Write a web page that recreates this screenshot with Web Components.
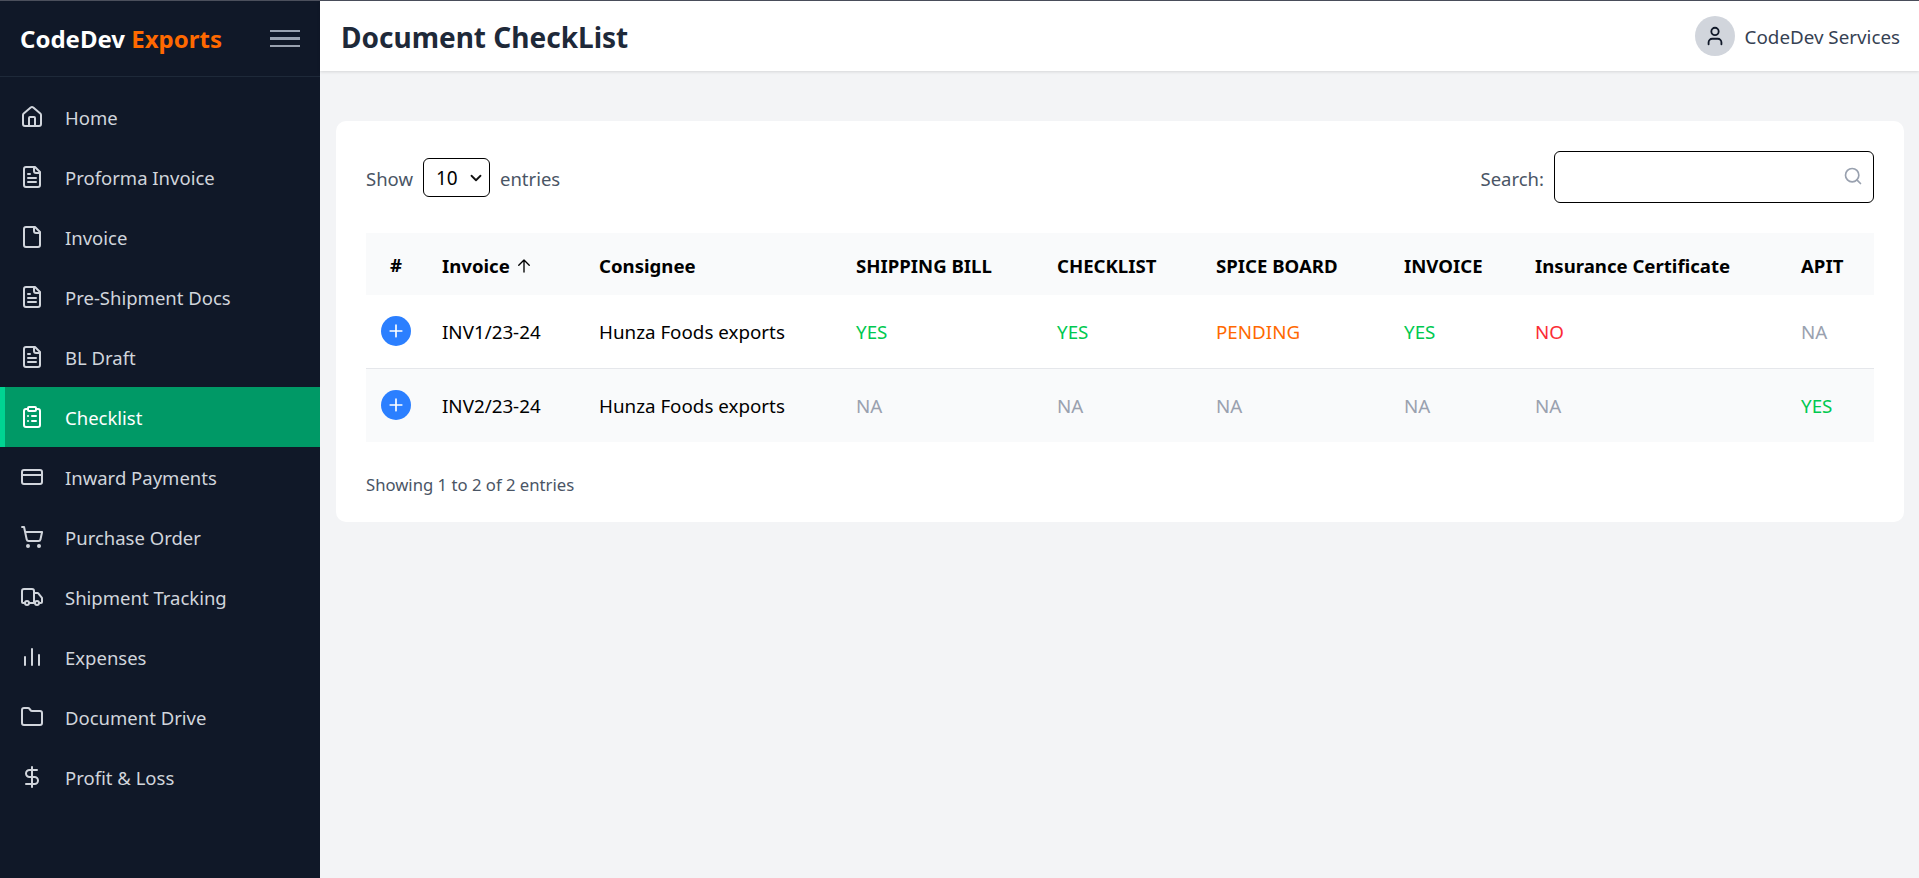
<!DOCTYPE html>
<html>
<head>
<meta charset="utf-8">
<title>Document CheckList</title>
<style>
  html, body { margin: 0; height: 100%; }
  body { font-family: "Noto Sans", "Liberation Sans", sans-serif; background: #f3f4f6; overflow: hidden; }
</style>
</head>
<body>
<app-shell>
  <side-bar slot="side">
    <nav-item icon="home">Home</nav-item>
    <nav-item icon="doc">Proforma Invoice</nav-item>
    <nav-item icon="blank">Invoice</nav-item>
    <nav-item icon="doc">Pre-Shipment Docs</nav-item>
    <nav-item icon="doc">BL Draft</nav-item>
    <nav-item icon="clipboard" active>Checklist</nav-item>
    <nav-item icon="card">Inward Payments</nav-item>
    <nav-item icon="cart">Purchase Order</nav-item>
    <nav-item icon="truck">Shipment Tracking</nav-item>
    <nav-item icon="bars">Expenses</nav-item>
    <nav-item icon="folder">Document Drive</nav-item>
    <nav-item icon="dollar">Profit &amp; Loss</nav-item>
  </side-bar>
  <top-bar slot="top" heading="Document CheckList" user="CodeDev Services"></top-bar>
  <table-card>
    <checklist-table></checklist-table>
  </table-card>
</app-shell>

<script>
const ICONS = {
  home: '<path d="M15 21v-8a1 1 0 0 0-1-1h-4a1 1 0 0 0-1 1v8"/><path d="M3 10a2 2 0 0 1 .709-1.528l7-5.999a2 2 0 0 1 2.582 0l7 5.999A2 2 0 0 1 21 10v9a2 2 0 0 1-2 2H5a2 2 0 0 1-2-2z"/>',
  doc: '<path d="M15 2H6a2 2 0 0 0-2 2v16a2 2 0 0 0 2 2h12a2 2 0 0 0 2-2V7Z"/><path d="M14 2v4a2 2 0 0 0 2 2h4"/><path d="M10 9H8M16 13H8M16 17H8"/>',
  blank: '<path d="M15 2H6a2 2 0 0 0-2 2v16a2 2 0 0 0 2 2h12a2 2 0 0 0 2-2V7Z"/><path d="M14 2v4a2 2 0 0 0 2 2h4"/>',
  clipboard: '<rect x="8" y="2" width="8" height="4" rx="1"/><path d="M16 4h2a2 2 0 0 1 2 2v14a2 2 0 0 1-2 2H6a2 2 0 0 1-2-2V6a2 2 0 0 1 2-2h2"/><path d="M12 11h4M12 16h4M8 11h.01M8 16h.01"/>',
  card: '<rect x="2" y="5" width="20" height="14" rx="2"/><path d="M2 10h20"/>',
  cart: '<circle cx="8" cy="21" r="1"/><circle cx="19" cy="21" r="1"/><path d="M2.05 2.05h2l2.66 12.42a2 2 0 0 0 2 1.58h9.78a2 2 0 0 0 1.95-1.57l1.65-7.43H5.12"/>',
  truck: '<path d="M14 18V6a2 2 0 0 0-2-2H4a2 2 0 0 0-2 2v11a1 1 0 0 0 1 1h2"/><path d="M15 18H9"/><path d="M19 18h2a1 1 0 0 0 1-1v-3.65a1 1 0 0 0-.22-.624l-3.48-4.35A1 1 0 0 0 17.52 8H14"/><circle cx="17" cy="18" r="2"/><circle cx="7" cy="18" r="2"/>',
  bars: '<path d="M5 20v-8M12 20V4M19 20V10"/>',
  folder: '<path d="M20 20a2 2 0 0 0 2-2V8a2 2 0 0 0-2-2h-7.9a2 2 0 0 1-1.69-.9L9.6 3.9A2 2 0 0 0 7.93 3H4a2 2 0 0 0-2 2v13a2 2 0 0 0 2 2Z"/>',
  dollar: '<path d="M12 2v20"/><path d="M17 5H9.5a3.5 3.5 0 0 0 0 7h5a3.5 3.5 0 0 1 0 7H6"/>'
};

class AppShell extends HTMLElement {
  constructor() {
    super();
    this.attachShadow({ mode: "open" });
    this.shadowRoot.innerHTML = `
      <style>
        :host { display: grid; grid-template-columns: 320px 1fr; grid-template-rows: 70px 1fr; height: 878px; border-top: 1px solid #4b4f5c; box-sizing: border-box; }
        ::slotted([slot=side]) { grid-row: 1 / 3; }
        main { padding: 50px 15px 0 16px; min-width: 0; }
      </style>
      <slot name="side"></slot>
      <slot name="top"></slot>
      <main><slot></slot></main>
    `;
  }
}

class SideBar extends HTMLElement {
  constructor() {
    super();
    this.attachShadow({ mode: "open" });
    this.shadowRoot.innerHTML = `
      <style>
        :host { display: block; background: #101828; color: #d1d5dc; }
        header { height: 76px; box-sizing: border-box; display: flex; align-items: center; justify-content: space-between; padding: 0 20px; border-bottom: 1px solid #1e2939; }
        .logo { font-size: 24px; font-weight: 700; color: #fff; }
        .logo span { color: #ff6900; }
        .menu { width: 30px; display: flex; flex-direction: column; gap: 5px; }
        .menu i { display: block; height: 2.5px; background: #99a1af; }
        nav { padding-top: 10px; display: flex; flex-direction: column; }
      </style>
      <header>
        <div class="logo">CodeDev <span>Exports</span></div>
        <div class="menu"><i></i><i></i><i></i></div>
      </header>
      <nav><slot></slot></nav>
    `;
  }
}

class NavItem extends HTMLElement {
  constructor() {
    super();
    this.attachShadow({ mode: "open" });
    const icon = ICONS[this.getAttribute("icon")] || "";
    this.shadowRoot.innerHTML = `
      <style>
        :host { display: flex; align-items: center; height: 60px; box-sizing: border-box; padding-left: 20px; gap: 21px; font-size: 18.5px; color: #d1d5dc; }
        :host([active]) { background: #009966; color: #fff; border-left: 5px solid #00d492; padding-left: 15px; }
        svg { width: 24px; height: 24px; flex: none; fill: none; stroke: currentColor; stroke-width: 2; stroke-linecap: round; stroke-linejoin: round; }
      </style>
      <svg viewBox="0 0 24 24">${icon}</svg>
      <span><slot></slot></span>
    `;
  }
}

class TopBar extends HTMLElement {
  constructor() {
    super();
    this.attachShadow({ mode: "open" });
    this.shadowRoot.innerHTML = `
      <style>
        :host { display: flex; align-items: center; justify-content: space-between; background: #fff; padding: 0 19px 0 21px; box-shadow: 0 1px 3px rgba(0,0,0,.12); position: relative; }
        h1 { margin: 0; padding-top: 2px; font-size: 28px; font-weight: 700; color: #1e2939; }
        .user { display: flex; align-items: center; gap: 10px; font-size: 18.8px; color: #364153; }
        .user span { padding-top: 2px; }
        .avatar { width: 40px; height: 40px; border-radius: 50%; background: #d1d5dc; display: flex; align-items: center; justify-content: center; }
        svg { width: 22px; height: 22px; fill: none; stroke: #101828; stroke-width: 2; stroke-linecap: round; stroke-linejoin: round; }
      </style>
      <h1>${this.getAttribute("heading")}</h1>
      <div class="user">
        <div class="avatar"><svg viewBox="0 0 24 24"><circle cx="12" cy="7" r="4"/><path d="M19 21v-2a4 4 0 0 0-4-4H9a4 4 0 0 0-4 4v2"/></svg></div>
        <span>${this.getAttribute("user")}</span>
      </div>
    `;
  }
}

class TableCard extends HTMLElement {
  constructor() {
    super();
    this.attachShadow({ mode: "open" });
    this.shadowRoot.innerHTML = `
      <style>
        :host { display: block; background: #fff; border-radius: 10px; padding: 30px; box-sizing: border-box; height: 401px; }
      </style>
      <slot></slot>
    `;
  }
}

class StatusCell extends HTMLElement {
  constructor() {
    super();
    this.attachShadow({ mode: "open" });
    const colors = { YES: "#00c950", NO: "#fb2c36", PENDING: "#ff6900", NA: "#99a1af" };
    this.shadowRoot.innerHTML = `
      <style>:host { color: ${colors[this.getAttribute("value")] || "#000"}; }</style>
      ${this.getAttribute("value")}
    `;
  }
}

class ChecklistTable extends HTMLElement {
  constructor() {
    super();
    this.attachShadow({ mode: "open" });
    const rows = [
      ["INV1/23-24", "Hunza Foods exports", ["YES", "YES", "PENDING", "YES", "NO", "NA"]],
      ["INV2/23-24", "Hunza Foods exports", ["NA", "NA", "NA", "NA", "NA", "YES"]]
    ];
    const body = rows.map(r => `
      <tr>
        <td class="ctl"><span class="plus"><svg viewBox="0 0 24 24"><path d="M12 5v14M5 12h14"/></svg></span></td>
        <td>${r[0]}</td>
        <td>${r[1]}</td>
        ${r[2].map(v => `<td><status-cell value="${v}"></status-cell></td>`).join("")}
      </tr>`).join("");
    this.shadowRoot.innerHTML = `
      <style>
        :host { display: block; font-size: 18.5px; color: #4a5565; }
        .tools { display: flex; justify-content: space-between; align-items: center; height: 52px; margin-bottom: 30px; }
        .tools > div { display: flex; align-items: center; gap: 10px; }
        .tools span { padding-top: 2px; }
        .select { width: 67px; height: 39px; box-sizing: border-box; border: 1px solid #000; border-radius: 6px; color: #000; display: flex; align-items: center; justify-content: space-between; padding: 0 4px 0 12px; font-size: 19px; margin-top: 1px; }
        .select svg { width: 18px; height: 18px; fill: none; stroke: #111; stroke-width: 2.4; stroke-linecap: round; stroke-linejoin: round; }
        .search { width: 320px; height: 52px; box-sizing: border-box; border: 1px solid #000; border-radius: 6px; display: flex; align-items: center; justify-content: flex-end; padding: 0 10px 3px 0; }
        .search svg { width: 20px; height: 20px; fill: none; stroke: #99a1af; stroke-width: 2; stroke-linecap: round; }
        table { width: 100%; table-layout: fixed; border-collapse: collapse; color: #000; font-size: 18.8px; }
        th { height: 60px; padding: 2px 0 0 15px; text-align: left; font-weight: 700; background: #f9fafb; white-space: nowrap; font-size: 18.6px; }
        td { height: 72px; padding: 1px 0 0 15px; white-space: nowrap; }
        tbody tr:nth-child(1) td { border-bottom: 1px solid #e5e7eb; }
        tbody tr:nth-child(2) td { background: #f9fafb; }
        th.ctl, td.ctl { padding: 0 1px 0 0; text-align: center; }
        .plus { display: inline-flex; width: 30px; height: 30px; border-radius: 50%; background: #2b7fff; align-items: center; justify-content: center; vertical-align: middle; position: relative; top: -1px; }
        .plus svg { width: 20px; height: 20px; fill: none; stroke: #fff; stroke-width: 2; stroke-linecap: round; }
        .arrow { width: 18px; height: 18px; vertical-align: -2px; fill: none; stroke: #000; stroke-width: 1.8; stroke-linecap: round; stroke-linejoin: round; }
        .info { margin-top: 31px; font-size: 16.7px; }
      </style>
      <div class="tools">
        <div><span>Show</span>
          <div class="select">10 <svg viewBox="0 0 24 24"><path d="M6 9l6 6 6-6"/></svg></div>
          <span>entries</span></div>
        <div><span>Search:</span>
          <div class="search"><svg viewBox="0 0 24 24"><circle cx="11" cy="11" r="8"/><path d="M21 21l-4.35-4.35"/></svg></div>
        </div>
      </div>
      <table>
        <colgroup>
          <col style="width:61px"><col style="width:157px"><col style="width:257px"><col style="width:201px">
          <col style="width:159px"><col style="width:188px"><col style="width:131px"><col style="width:266px"><col>
        </colgroup>
        <thead>
          <tr>
            <th class="ctl">#</th>
            <th>Invoice <svg class="arrow" viewBox="0 0 24 24"><path d="M12 20V4M5 11l7-7 7 7"/></svg></th>
            <th>Consignee</th>
            <th>SHIPPING BILL</th>
            <th>CHECKLIST</th>
            <th>SPICE BOARD</th>
            <th>INVOICE</th>
            <th>Insurance Certificate</th>
            <th>APIT</th>
          </tr>
        </thead>
        <tbody>${body}</tbody>
      </table>
      <div class="info">Showing 1 to 2 of 2 entries</div>
    `;
  }
}

customElements.define("app-shell", AppShell);
customElements.define("side-bar", SideBar);
customElements.define("nav-item", NavItem);
customElements.define("top-bar", TopBar);
customElements.define("table-card", TableCard);
customElements.define("status-cell", StatusCell);
customElements.define("checklist-table", ChecklistTable);
</script>
</body>
</html>
